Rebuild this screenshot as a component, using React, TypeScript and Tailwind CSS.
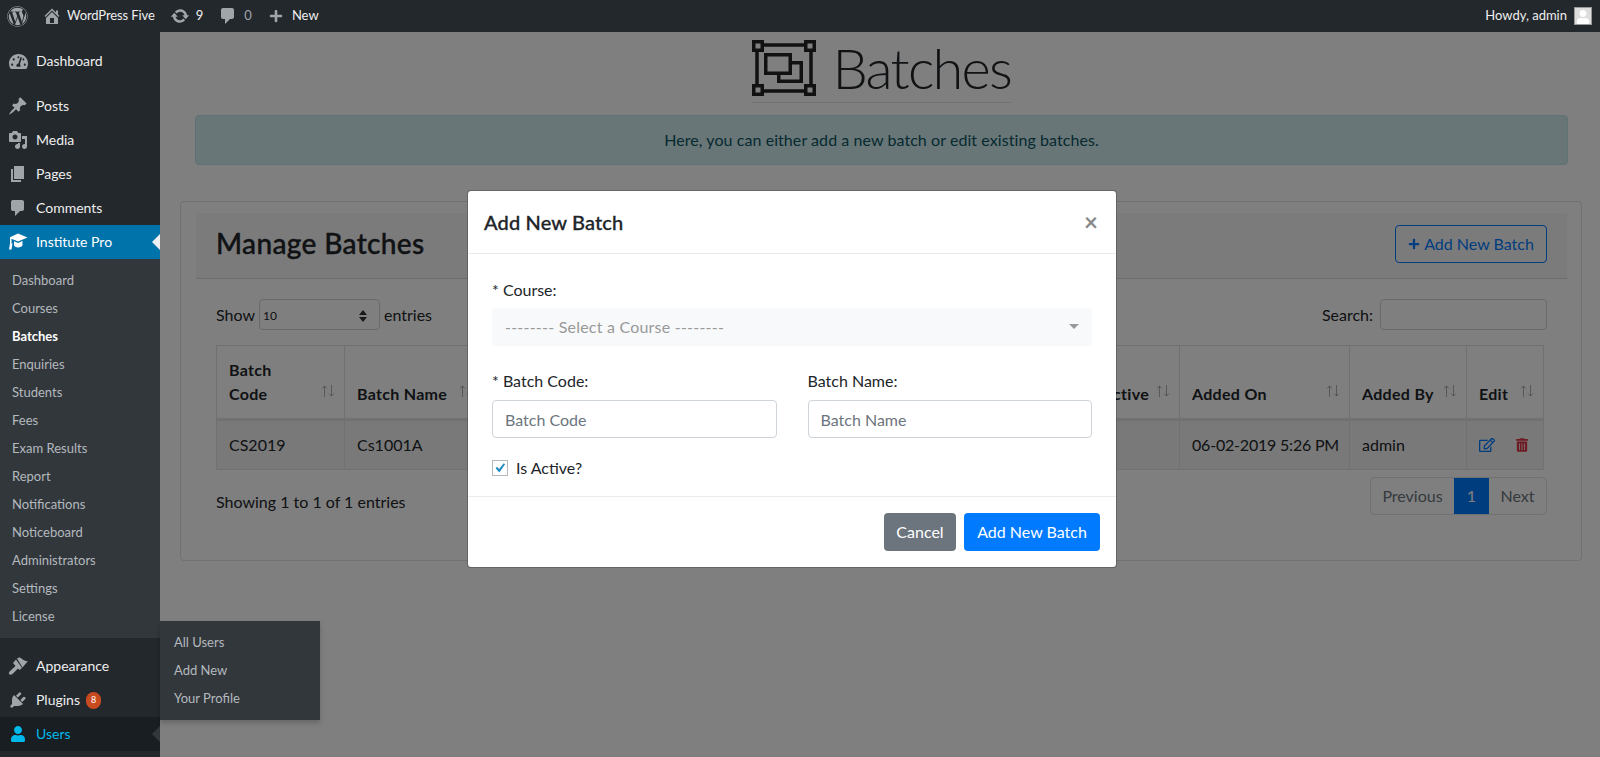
import React from 'react';
import { FaWordpress, FaTachometerAlt, FaPlus, FaRegEdit, FaTrashAlt, FaUser } from 'react-icons/fa';

const Dash: React.FC<{ d: string; className?: string }> = ({ d, className }) => (
  <svg viewBox="0 0 20 20" className={className} fill="currentColor">
    <path d={d} />
  </svg>
);

const HOME = 'M16 8.5l1.53 1.53-1.06 1.06L10 4.62l-6.47 6.47-1.06-1.06L10 2.5l4 4v-2h2v4zm-6-2.46l6 5.99V18H4v-5.97zM12 17v-5H8v5h4z';
const UPDATE = 'M10.2 3.28c3.53 0 6.43 2.61 6.92 6h2.08l-3.5 4-3.5-4h2.32c-.45-1.97-2.21-3.44-4.32-3.44-1.45 0-2.73.71-3.54 1.78L4.95 5.66C6.23 4.2 8.11 3.28 10.2 3.28zm-.4 13.44c-3.52 0-6.43-2.61-6.92-6H.8l3.5-4c1.17 1.33 2.33 2.67 3.5 4H5.48c.45 1.97 2.21 3.44 4.32 3.44 1.45 0 2.73-.71 3.54-1.77l1.71 1.95c-1.28 1.46-3.15 2.38-5.25 2.38z';
const COMMENT = 'M5 2h9c1.1 0 2 .9 2 2v7c0 1.1-.9 2-2 2h-2l-5 5v-5H5c-1.1 0-2-.9-2-2V4c0-1.1.9-2 2-2z';
const PIN = 'M10.44 3.02l1.82-1.82 6.36 6.35-1.83 1.82c-1.05-.68-2.48-.57-3.41.36l-.75.75c-.92.93-1.04 2.35-.35 3.41l-1.83 1.82-2.41-2.41-2.8 2.79c-.42.42-3.38 2.71-3.8 2.29s1.86-3.39 2.28-3.81l2.79-2.79L4.1 9.36l1.83-1.82c1.05.69 2.48.57 3.4-.36l.75-.75c.93-.92 1.05-2.35.36-3.41z';
const MEDIA = 'M13 11V4c0-.55-.45-1-1-1h-1.67L9 1H5L3.67 3H2c-.55 0-1 .45-1 1v7c0 .55.45 1 1 1h10c.55 0 1-.45 1-1zM7 4.5c1.38 0 2.5 1.12 2.5 2.5S8.38 9.5 7 9.5 4.5 8.38 4.5 7 5.62 4.5 7 4.5zM14 6h5v10.5c0 1.38-1.12 2.5-2.5 2.5S14 17.88 14 16.5s1.12-2.5 2.5-2.5c.17 0 .34.02.5.05V9h-3V6zm-4 8.05V13h2v3.5c0 1.38-1.12 2.5-2.5 2.5S7 17.88 7 16.5 8.12 14 9.5 14c.17 0 .34.02.5.05z';
const PAGE = 'M6 15V2h10v13H6zm-1 1h8v2H3V5h2v11z';
const PLUGIN = 'M13.11 4.36L9.87 7.6 8 5.73l3.24-3.24c.35-.34 1.05-.2 1.56.32.52.51.66 1.21.31 1.55zm-8 1.77l.91-1.12 9.01 9.01-1.19.84c-.71.71-2.63 1.16-3.82 1.16H6.14L4.9 17.26c-.59.59-1.54.59-2.12 0-.59-.58-.59-1.53 0-2.12l1.24-1.24v-3.88c0-1.13.4-3.19 1.09-3.89zm7.26 3.97l3.24-3.24c.34-.35 1.04-.21 1.55.31.52.51.66 1.21.31 1.55l-3.24 3.25z';
const CAP = 'M10 1.5L19.5 5.5L10 9.5L3.5 6.8V11.5H4.5L3.5 17.5H1L2 11.5V5.3zM6 9.3L10 11L14.5 9.1V13C14.5 14.5 12 15.5 10 15.5C8 15.5 6 14.5 6 13z';
const BRUSH = 'M9 2.5L11 1.5C13 1.5 14 3 15.5 4C17 5 18.5 5.5 20 5L14.5 11.5zM8 3.5L14 12L11.5 14L10 12.5L4.5 18C3.5 19 2 19 1.3 18.3C.6 17.6.8 16.2 1.8 15.2L7.5 10L5 7z';

const SortArrows: React.FC = () => (
  <svg viewBox="0 0 14 12" className="absolute right-[9px] bottom-[21px] w-[14px] h-[12px] text-black/30" fill="none" stroke="currentColor" strokeWidth="1">
    <path d="M3.5 12V1M1 3.5L3.5 1L6 3.5M10.5 0V11M8 8.5L10.5 11L13 8.5" />
  </svg>
);

const MenuItem: React.FC<{ icon: React.ReactNode; label: string; active?: boolean }> = ({ icon, label, active }) => (
  <div className={`relative h-[34px] flex items-center text-sm text-[#eeeeee] ${active ? 'bg-[#0073aa] text-white' : ''}`}>
    <span className={`w-[36px] flex justify-center ${active ? 'text-white' : 'text-[#a0a5aa]'}`}>{icon}</span>
    <span>{label}</span>
    {active && <span className="absolute right-0 top-[9px] border-y-[8px] border-r-[8px] border-y-transparent border-r-[#f1f1f1]" />}
  </div>
);

const submenu = ['Dashboard', 'Courses', 'Batches', 'Enquiries', 'Students', 'Fees', 'Exam Results', 'Report', 'Notifications', 'Noticeboard', 'Administrators', 'Settings', 'License'];

const Sidebar: React.FC = () => (
  <aside className="relative w-[160px] shrink-0 bg-[#23282d] pt-[12px] z-10">
    <MenuItem icon={<FaTachometerAlt className="w-[19px] h-[19px]" />} label="Dashboard" />
    <div className="h-[11px]" />
    <MenuItem icon={<Dash d={PIN} className="w-5 h-5" />} label="Posts" />
    <MenuItem icon={<Dash d={MEDIA} className="w-5 h-5" />} label="Media" />
    <MenuItem icon={<Dash d={PAGE} className="w-5 h-5" />} label="Pages" />
    <MenuItem icon={<Dash d={COMMENT} className="w-5 h-5" />} label="Comments" />
    <MenuItem icon={<Dash d={CAP} className="w-5 h-5" />} label="Institute Pro" active />
    <div className="bg-[#32373c] pt-[8px] pb-[7px]">
      {submenu.map((item) => (
        <div key={item} className={`h-[28px] pl-[12px] flex items-center text-[13px] ${item === 'Batches' ? 'text-white font-bold' : 'text-[#b4b9be]'}`}>
          {item}
        </div>
      ))}
    </div>
    <div className="h-[11px]" />
    <MenuItem icon={<Dash d={BRUSH} className="w-5 h-5" />} label="Appearance" />
    <div className="relative h-[34px] flex items-center text-sm text-[#eeeeee]">
      <span className="w-[36px] flex justify-center text-[#a0a5aa]"><Dash d={PLUGIN} className="w-5 h-5" /></span>
      <span>Plugins</span>
      <span className="ml-[6px] w-[15px] h-[17px] rounded-full bg-[#ca4a1f] text-white text-[9px] flex items-center justify-center">8</span>
    </div>
    <div className="relative h-[34px] flex items-center text-sm text-[#00b9eb] bg-[#191e23]">
      <span className="w-[36px] flex justify-center"><FaUser className="w-[16px] h-[16px]" /></span>
      <span>Users</span>
      <span className="absolute right-0 top-[9px] border-y-[8px] border-r-[8px] border-y-transparent border-r-[#32373c]" />
    </div>
    <div className="absolute left-[160px] top-[589px] w-[160px] h-[99px] pt-[8px] bg-[#32373c] shadow-[0_3px_5px_rgba(0,0,0,0.2)]">
      {['All Users', 'Add New', 'Your Profile'].map((item) => (
        <div key={item} className="h-[28px] pl-[14px] flex items-center text-[13px] text-[#b4b9be]">{item}</div>
      ))}
    </div>
  </aside>
);

const TopBar: React.FC = () => (
  <header className="h-[32px] shrink-0 bg-[#23282d] flex items-center text-[13px] text-[#eeeeee] pl-[7px] pr-[8px]">
    <FaWordpress className="w-[21px] h-[21px] text-[#a0a5aa]" />
    <Dash d={HOME} className="ml-[14px] w-5 h-5 text-[#a0a5aa]" />
    <span className="ml-[5px] tracking-[-0.1px]">WordPress Five</span>
    <Dash d={UPDATE} className="ml-[15px] w-5 h-5 text-[#a0a5aa]" />
    <span className="ml-[6px]">9</span>
    <Dash d={COMMENT} className="ml-[15px] w-5 h-5 text-[#a0a5aa]" />
    <span className="ml-[6px] text-[#a0a5aa]">0</span>
    <FaPlus className="ml-[17px] w-[14px] h-[14px] text-[#a0a5aa]" />
    <span className="ml-[9px]">New</span>
    <span className="ml-auto">Howdy, admin</span>
    <span className="ml-[7px] w-[18px] h-[18px] bg-[#dddddd] border border-[#999999] flex items-end justify-center overflow-hidden">
      <FaUser className="w-[14px] h-[14px] text-white" />
    </span>
  </header>
);

const BatchIcon: React.FC = () => (
  <svg viewBox="0 0 64 56" className="w-[64px] h-[56px] shrink-0 text-[#222222]" fill="none" stroke="currentColor" strokeWidth="3.5">
    <path d="M9 5H55M9 51H55M5 9V47M59 9V47" />
    <rect x="1.75" y="1.75" width="8.5" height="8.5" />
    <rect x="53.75" y="1.75" width="8.5" height="8.5" />
    <rect x="1.75" y="45.75" width="8.5" height="8.5" />
    <rect x="53.75" y="45.75" width="8.5" height="8.5" />
    <rect x="13.75" y="14.75" width="24.5" height="18.5" />
    <path d="M40 22.75H49.25V41.25H26.75V33" />
  </svg>
);

const Modal: React.FC = () => (
  <div className="absolute left-[307px] top-[158px] w-[650px] h-[378px] bg-white border border-black/20 bg-clip-padding rounded-[4px] text-[#212529]">
    <div className="h-[63px] px-[16px] flex items-center justify-between border-b border-[#e9ecef]">
      <h5 className="text-xl font-medium tracking-[0.15px] [-webkit-text-stroke:0.3px]">Add New Batch</h5>
      <span className="text-[#888888] text-2xl font-bold leading-none pr-[2px]">×</span>
    </div>
    <div className="h-[242px] pt-[24px] px-[24px]">
      <label className="block h-[24px] mb-[6px]">* Course:</label>
      <div className="h-[38px] mb-[23px] bg-[#f8f9fa] rounded-[4px] flex items-center justify-between pl-[13px] pr-[13px] text-[#999999]">
        <span className="tracking-[0.22px]">-------- Select a Course --------</span>
        <span className="border-x-[5px] border-t-[5px] border-x-transparent border-t-[#999999] mb-[2px]" />
      </div>
      <div className="grid grid-cols-2 gap-x-[31px] mb-[18px]">
        <div>
          <label className="block h-[24px] mb-[7px]">* Batch Code:</label>
          <input placeholder="Batch Code" className="w-full h-[38px] px-[12px] border border-[#ced4da] rounded-[4px] placeholder:text-[#6c757d]" />
        </div>
        <div>
          <label className="block h-[24px] mb-[7px]">Batch Name:</label>
          <input placeholder="Batch Name" className="w-full h-[38px] px-[12px] border border-[#ced4da] rounded-[4px] placeholder:text-[#6c757d]" />
        </div>
      </div>
      <div className="flex items-center h-[24px]">
        <span className="w-[16px] h-[16px] border border-[#b4b9be] flex items-center justify-center">
          <svg viewBox="0 0 16 16" className="w-[16px] h-[16px] text-[#1e8cbe]" fill="currentColor">
            <path d="M3 8.2L4.7 6.5L7 9L12.3 2.5L13.8 3.8L7.2 13.2z" />
          </svg>
        </span>
        <span className="ml-[8px]">Is Active?</span>
      </div>
    </div>
    <div className="h-[71px] border-t border-[#e9ecef] flex items-start justify-end gap-[8px] pt-[16px] px-[16px]">
      <button className="h-[38px] w-[72px] rounded-[4px] bg-[#6c757d] text-white">Cancel</button>
      <button className="h-[38px] w-[136px] rounded-[4px] bg-[#007bff] text-white">Add New Batch</button>
    </div>
  </div>
);

const thClass = 'relative align-bottom text-left font-bold tracking-[0.3px] p-[12px] border border-[#dee2e6] border-b-[3px]';
const tdClass = 'px-[12px] border border-[#dee2e6]';

const Main: React.FC = () => (
  <main className="relative flex-1 min-w-0 bg-white text-[#212529]">
    <div className="pl-[20px] pr-[18px]">
      <div className="flex justify-center pt-[8px]">
        <div className="flex items-center gap-[17px] h-[63px] w-[259px] border-b border-black/10 pb-[6px]">
          <BatchIcon />
          <span className="text-[56px] leading-none font-light tracking-[-1.8px]">Batches</span>
        </div>
      </div>
      <div className="ml-[15px] mr-[14px] mt-[12px] h-[50px] flex items-center justify-center bg-[#d1ecf1] border border-[#bee5eb] rounded-[4px] text-[#0c5460] tracking-[0.07px]">
        Here, you can either add a new batch or edit existing batches.
      </div>
      <section className="mt-[36px] h-[360px] border border-black/12 rounded-[4px] pt-[11px] pl-[15px] pr-[14px]">
        <div className="h-[66px] bg-black/3 border-b border-black/12 flex items-start justify-between pt-[12px] pl-[20px] pr-[20px]">
          <h2 className="text-[28px] leading-[38px] -mt-[1px] font-medium tracking-[0.36px] [-webkit-text-stroke:0.4px]">Manage Batches</h2>
          <button className="h-[38px] w-[152px] border border-[#007bff] rounded-[4px] text-[#007bff] flex items-center justify-center gap-[4px]">
            <FaPlus className="w-[12px] h-[12px]" />
            Add New Batch
          </button>
        </div>
        <div className="px-[20px] pt-[20px]">
          <div className="flex items-center justify-between h-[31px] mb-[15px]">
            <div className="flex items-center">
              Show
              <span className="ml-[4px] mr-[4px] w-[121px] h-[31px] border border-[#ced4da] rounded-[4px] pl-[3px] pr-[12px] pt-[3px] flex items-center justify-between text-[12px]">
                10
                <svg viewBox="0 0 8 12" className="w-[8px] h-[12px] text-[#333333]" fill="currentColor">
                  <path d="M4 0L8 5H0zM0 7H8L4 12z" />
                </svg>
              </span>
              entries
            </div>
            <div className="flex items-center gap-[7px]">
              Search:
              <input className="w-[167px] h-[31px] border border-[#ced4da] rounded-[4px]" />
            </div>
          </div>
          <table className="table-fixed border-collapse w-[1327px] border border-[#dee2e6]">
            <thead>
              <tr>
                <th className={`${thClass} w-[128px] h-[73px] leading-[24px]`}>Batch<br />Code<SortArrows /></th>
                <th className={`${thClass} w-[138px]`}>Batch Name<SortArrows /></th>
                <th className={`${thClass} w-[591px]`} />
                <th className={`${thClass} w-[106px]`}>Is Active<SortArrows /></th>
                <th className={`${thClass} w-[170px]`}>Added On<SortArrows /></th>
                <th className={`${thClass} w-[117px]`}>Added By<SortArrows /></th>
                <th className={`${thClass} w-[77px]`}>Edit<SortArrows /></th>
              </tr>
            </thead>
            <tbody>
              <tr className="bg-black/5">
                <td className={`${tdClass} h-[50px]`}>CS2019</td>
                <td className={tdClass}>Cs1001A</td>
                <td className={tdClass} />
                <td className={tdClass} />
                <td className={`${tdClass} whitespace-nowrap tracking-[-0.2px]`}>06-02-2019 5:26 PM</td>
                <td className={tdClass}>admin</td>
                <td className={tdClass}>
                  <span className="flex items-center gap-[21px]">
                    <FaRegEdit className="w-[16px] h-[16px] text-[#007bff]" />
                    <FaTrashAlt className="w-[12px] h-[14px] text-[#dc3545]" />
                  </span>
                </td>
              </tr>
            </tbody>
          </table>
          <div className="flex items-start justify-between mt-[7px]">
            <span className="pt-[13px]">Showing 1 to 1 of 1 entries</span>
            <div className="flex h-[38px] border border-[#dee2e6] rounded-[4px]">
              <span className="w-[83px] flex items-center justify-center text-[#6c757d]">Previous</span>
              <span className="w-[35px] flex items-center justify-center bg-[#007bff] text-white">1</span>
              <span className="w-[57px] flex items-center justify-center text-[#6c757d]">Next</span>
            </div>
          </div>
        </div>
      </section>
    </div>
    <div className="absolute inset-0 bg-black/50" />
    <Modal />
  </main>
);

export default function App() {
  return (
    <div className="w-[1600px] h-[757px] overflow-hidden flex flex-col font-[Lato,sans-serif]">
      <TopBar />
      <div className="flex flex-1 min-h-0">
        <Sidebar />
        <Main />
      </div>
    </div>
  );
}
